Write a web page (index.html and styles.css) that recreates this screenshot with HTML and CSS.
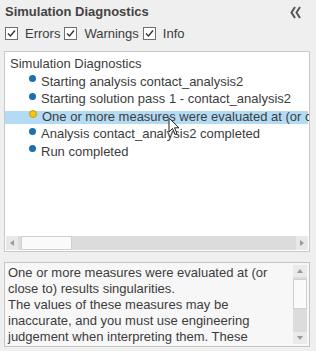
FILE: index.html
```html
<!DOCTYPE html>
<html>
<head>
<meta charset="utf-8">
<link rel="stylesheet" href="styles.css">
</head>
<body>
<div class="panel">
  <div class="header">
    <span class="title">Simulation Diagnostics</span>
    <svg class="collapse" width="11" height="13" viewBox="0 0 11 13">
      <path d="M5 1 L1.5 6.5 L5 12" fill="none" stroke="#555" stroke-width="2"/>
      <path d="M10 1 L6.5 6.5 L10 12" fill="none" stroke="#555" stroke-width="2"/>
    </svg>
  </div>
  <div class="filters">
    <label class="filter"><span class="cb"><svg width="9" height="9" viewBox="0 0 9 9"><path d="M1 4.5 L3.5 7 L8 1.5" fill="none" stroke="#333" stroke-width="1.4"/></svg></span>Errors</label>
    <label class="filter"><span class="cb"><svg width="9" height="9" viewBox="0 0 9 9"><path d="M1 4.5 L3.5 7 L8 1.5" fill="none" stroke="#333" stroke-width="1.4"/></svg></span>Warnings</label>
    <label class="filter"><span class="cb"><svg width="9" height="9" viewBox="0 0 9 9"><path d="M1 4.5 L3.5 7 L8 1.5" fill="none" stroke="#333" stroke-width="1.4"/></svg></span>Info</label>
  </div>
  <div class="tree">
    <div class="tree-body">
      <div class="root">Simulation Diagnostics</div>
      <div class="item"><span class="dot info"></span>Starting analysis contact_analysis2</div>
      <div class="item"><span class="dot info"></span>Starting solution pass 1 - contact_analysis2</div>
      <div class="item selected"><span class="dot warn"></span>One or more measures were evaluated at (or close to) results singularities.</div>
      <div class="item"><span class="dot info"></span>Analysis contact_analysis2 completed</div>
      <div class="item"><span class="dot info"></span>Run completed</div>
      <svg class="cursor" width="12" height="19" viewBox="0 0 12 19">
        <path d="M1 1 L1 15 L4.5 11.5 L7 17.5 L9 16.6 L6.6 10.8 L11 10.8 Z" fill="#fff" stroke="#222" stroke-width="1"/>
      </svg>
    </div>
    <div class="hscroll">
      <span class="arrow-left"></span>
      <div class="htrack"><div class="hthumb"></div></div>
      <span class="arrow-right"></span>
    </div>
  </div>
  <div class="details">
    <div class="details-text">One or more measures were evaluated at (or close to) results singularities.<br>The values of these measures may be inaccurate, and you must use engineering judgement when interpreting them. These</div>
    <div class="vscroll">
      <span class="arrow-up"></span>
      <div class="vtrack"><div class="vthumb"></div></div>
      <span class="arrow-down"></span>
    </div>
  </div>
</div>
</body>
</html>
```
FILE: styles.css
```css
html, body {
  margin: 0;
  padding: 0;
  background: #efefef;
}
body {
  width: 316px;
  height: 351px;
  overflow: hidden;
  font-family: "Liberation Sans", Arial, sans-serif;
  font-size: 13px;
  color: #3c3c3c;
}
.panel {
  display: flex;
  flex-direction: column;
  padding: 3px 6px 0 4px;
}
.header {
  display: flex;
  justify-content: space-between;
  align-items: center;
  height: 17px;
  padding-left: 1px;
}
.title {
  font-weight: bold;
  color: #434343;
}
.collapse {
  margin-right: 9px;
  margin-top: 2px;
}
.filters {
  display: flex;
  align-items: center;
  height: 20px;
  margin-top: 3px;
  padding-left: 1px;
}
.filter {
  display: flex;
  align-items: center;
  margin-right: 4px;
}
.cb {
  width: 11px;
  height: 11px;
  border: 1px solid #6f6f6f;
  background: #fff;
  display: flex;
  align-items: center;
  justify-content: center;
  margin-right: 7px;
}
.tree {
  margin-top: 8px;
  height: 201px;
  border: 1px solid #c8c8c8;
  background: #fff;
  display: flex;
  flex-direction: column;
  box-sizing: border-box;
}
.tree-body {
  position: relative;
  flex: 1;
  overflow: hidden;
  padding-top: 3px;
}
.root {
  padding-left: 5px;
  line-height: 17.5px;
  white-space: nowrap;
}
.item {
  display: flex;
  align-items: center;
  white-space: nowrap;
  line-height: 17.5px;
  padding-left: 24px;
  margin-right: 1px;
}
.item.selected {
  background: linear-gradient(#fff 0, #fff 3px, #b3dcf4 3px, #b3dcf4 16px, #fff 16px);
}
.dot {
  width: 7px;
  height: 7px;
  border-radius: 50%;
  margin-right: 5px;
  margin-top: -5px;
  flex: none;
}
.dot.info {
  background: #1a6fae;
}
.dot.warn {
  background: #f5c518;
  border: 1px solid #c89b10;
  width: 6px;
  height: 6px;
}
.cursor {
  position: absolute;
  left: 163px;
  top: 65px;
}
.hscroll {
  display: flex;
  align-items: center;
  height: 14px;
  margin: 0 1px 1px 1px;
  background: #dcdcdc;
}
.arrow-left, .arrow-right {
  width: 12px;
  height: 14px;
  background: #e8e8e8;
  position: relative;
  flex: none;
}
.arrow-left::after {
  content: "";
  position: absolute;
  left: 4px;
  top: 4px;
  border-right: 4px solid #9a9a9a;
  border-top: 3px solid transparent;
  border-bottom: 3px solid transparent;
}
.arrow-right::after {
  content: "";
  position: absolute;
  left: 4px;
  top: 4px;
  border-left: 4px solid #9a9a9a;
  border-top: 3px solid transparent;
  border-bottom: 3px solid transparent;
}
.htrack {
  flex: 1;
  height: 14px;
}
.hthumb {
  width: 49px;
  height: 12px;
  margin-left: 3px;
  background: #fafafa;
  border: 1px solid #d0d0d0;
}
.details {
  margin-top: 10px;
  height: 85px;
  border: 1px solid #c4c4c4;
  background: #f7f7f7;
  display: flex;
  box-sizing: border-box;
}
.details-text {
  flex: 1;
  padding: 2px 4px 0 3px;
  line-height: 16px;
  overflow: hidden;
}
.vscroll {
  width: 14px;
  margin: 2px 2px 2px 0;
  display: flex;
  flex-direction: column;
  background: #dcdcdc;
}
.arrow-up, .arrow-down {
  height: 12px;
  background: #eaeaea;
  position: relative;
  flex: none;
}
.arrow-up::after {
  content: "";
  position: absolute;
  left: 4px;
  top: 4px;
  border-bottom: 4px solid #9a9a9a;
  border-left: 3px solid transparent;
  border-right: 3px solid transparent;
}
.arrow-down::after {
  content: "";
  position: absolute;
  left: 4px;
  top: 4px;
  border-top: 4px solid #9a9a9a;
  border-left: 3px solid transparent;
  border-right: 3px solid transparent;
}
.vtrack {
  flex: 1;
}
.vthumb {
  height: 30px;
  margin-top: 2px;
  background: #fafafa;
  border: 1px solid #d0d0d0;
  box-sizing: border-box;
}
```
